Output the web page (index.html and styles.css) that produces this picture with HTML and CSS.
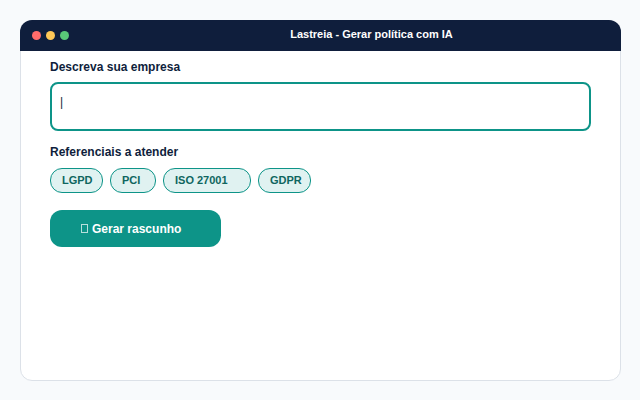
FILE: index.html
```html
<!DOCTYPE html>
<html lang="pt-BR">
<head>
	<title>Lastreia - Gerar política com IA</title>
	<meta charset="UTF-8">
	<meta name="viewport" content="width=device-width, initial-scale=1">
	<link rel="stylesheet" href="styles.css">
</head>
<body>
	<main class="janela">
		<header class="barra">
			<div class="bolinhas">
				<span class="bolinha vermelha"></span>
				<span class="bolinha amarela"></span>
				<span class="bolinha verde"></span>
			</div>
			<h1 class="titulo">Lastreia - Gerar política com IA</h1>
		</header>
		<form class="formulario">
			<label class="rotulo" for="empresa">Descreva sua empresa</label>
			<textarea class="descricao" id="empresa">|</textarea>

			<h2 class="rotulo" id="referenciais">Referenciais a atender</h2>
			<!-- a largura de cada etiqueta depende do numero de letras -->
			<div class="etiquetas" role="group" aria-labelledby="referenciais">
				<button type="button" class="etiqueta" style="--letras: 4">LGPD</button>
				<button type="button" class="etiqueta" style="--letras: 3">PCI</button>
				<button type="button" class="etiqueta" style="--letras: 9">ISO 27001</button>
				<button type="button" class="etiqueta" style="--letras: 4">GDPR</button>
			</div>

			<button type="button" class="gerar"><span class="icone"></span>Gerar rascunho</button>
		</form>
	</main>
</body>
</html>
```

FILE: styles.css
```css
*{
    box-sizing: border-box;
}

body{
    margin: 0;
    padding: 20px 19px 19px 20px;
    min-height: 100vh;
    display: flex;
    background-color: #f8fafc;
    color: #0f1e3c;
    font-family: "Liberation Sans", Arial, sans-serif;
    font-size: 12px;
    line-height: 14px;
}

.janela{
    flex: 1;
    background-color: #ffffff;
    border: 1px solid #dce1e8;
    border-radius: 12px;
}

/* cobre a borda da janela */
.barra{
    display: flex;
    align-items: center;
    margin: -1px -1px 0;
    padding: 0 12px;
    height: 31px;
    background-color: #0f1e3c;
    border-radius: 12px 12px 0 0;
}

.bolinhas{
    display: flex;
    gap: 5px;
}

.bolinha{
    width: 9px;
    height: 9px;
    border-radius: 50%;
}

.vermelha{
    background-color: #ff6b6b;
}

.amarela{
    background-color: #ffc857;
}

.verde{
    background-color: #59c878;
}

.titulo{
    flex: 1;
    margin: 0;
    padding: 0 0 4px 65px;
    color: #ffffff;
    font-size: 11px;
    line-height: 14px;
    text-align: center;
}

.formulario{
    padding: 9px 29px;
}

.rotulo{
    display: block;
    margin: 0;
    font-size: 12px;
    font-weight: bold;
    line-height: 14px;
}

.descricao{
    display: block;
    width: 100%;
    height: 49px;
    margin: 8px 0 14px;
    padding: 11px 8px;
    border: 2px solid #0d9488;
    border-radius: 8px;
    outline: none;
    resize: none;
    overflow: hidden;
    background-color: #ffffff;
    color: #0f1e3c;
    font: inherit;
}

.etiquetas{
    display: flex;
    flex-wrap: wrap;
    gap: 7px;
    margin: 9px 0 17px;
}

.etiqueta{
    width: calc(var(--letras) * 7px + 25px);
    height: 25px;
    padding: 0 0 2px 11px;
    border: 1px solid #0d9488;
    border-radius: 12px;
    background-color: #e0f2f1;
    color: #0f665f;
    font-family: inherit;
    font-size: 11px;
    font-weight: bold;
    text-align: left;
    white-space: nowrap;
    cursor: pointer;
}

.gerar{
    display: flex;
    align-items: center;
    gap: 4px;
    height: 37px;
    padding: 0 40px 0 31px;
    border: none;
    border-radius: 12px;
    background-color: #0d9488;
    color: #ffffff;
    font-family: inherit;
    font-size: 12px;
    font-weight: bold;
    cursor: pointer;
}

.icone{
    width: 7px;
    height: 9px;
    border: 1px solid #b6dfdb;
}
```
